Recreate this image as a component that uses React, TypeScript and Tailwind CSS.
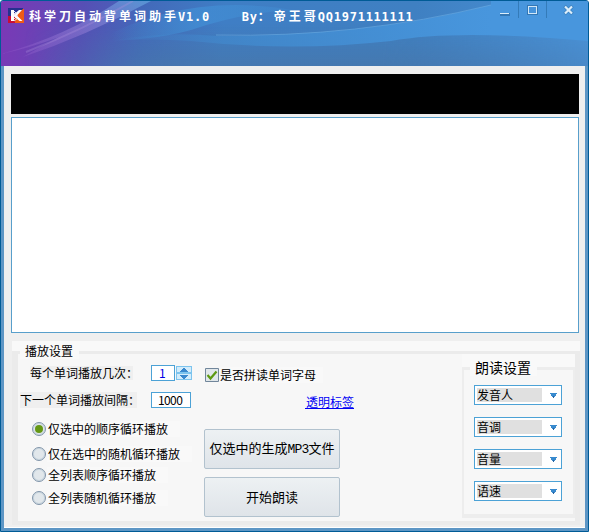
import React from "react";

const mono = "font-['DejaVu_Sans_Mono','Noto_Sans_CJK_SC',monospace]";
const digits = "font-['Noto_Sans_CJK_SC',sans-serif]";

function SpinArrow({ up = false }: { up?: boolean }) {
  return (
    <div className="flex h-[7px] w-4 items-center justify-center border border-[#7cc4ee] bg-[#d3ecfb]">
      <svg width="8" height="4" viewBox="0 0 8 4" shapeRendering="crispEdges">
        <path d={up ? "M3 0h2v1h1v1h1v1h1v1H0V3h1V2h1V1h1z" : "M0 0h8v1H7v1H6v1H5v1H3V3H2V2H1V1H0z"} fill="#3888ce" />
      </svg>
    </div>
  );
}

function Radio({ label, checked = false, className }: { label: string; checked?: boolean; className: string }) {
  return (
    <div className={`ml-[14px] flex h-4 shrink-0 items-center ${className}`}>
      <div className="flex size-[14px] shrink-0 items-center justify-center rounded-full border border-[#8195aa] bg-[#e1e7eb] shadow-[inset_0_0_0_1px_#c9d6df]">
        {checked && <div className="size-2 rounded-full bg-[#659815]" />}
      </div>
      <span className="ml-px h-4 bg-[#f9f9f9] pr-3 pl-px leading-4">{label}</span>
    </div>
  );
}

function Select({ label }: { label: string }) {
  return (
    <div className="flex h-5 w-[88px] items-center justify-between border border-[#4ca2d6] bg-white pr-1 pl-[2px]">
      <span className="h-[14px] w-[65px] bg-[#e0e0e0] leading-[14px]">{label}</span>
      <svg width="7" height="5" viewBox="0 0 7 5" className="mt-px" shapeRendering="crispEdges">
        <path d="M0 0h7v1H6v2H5v1H4v1H3V4H2V3H1V1H0z" fill="#388ace" />
        <path d="M3 3h1v2H3z" fill="#2b64a0" />
      </svg>
    </div>
  );
}

function HeaderArt() {
  return (
    <svg className="absolute inset-0" width="587" height="65" viewBox="0 0 587 65">
      <defs>
        <linearGradient id="base" gradientUnits="userSpaceOnUse" x1="0" y1="0" x2="587" y2="60">
          <stop offset="0" stopColor="#7b38b6" />
          <stop offset=".06" stopColor="#6d41b6" />
          <stop offset=".14" stopColor="#564fb5" />
          <stop offset=".24" stopColor="#4369ba" />
          <stop offset=".38" stopColor="#3f7ec5" />
          <stop offset=".7" stopColor="#3f80c2" />
          <stop offset="1" stopColor="#4a93d8" />
        </linearGradient>
        <linearGradient id="shade" x1="0" y1="0" x2="0" y2="1">
          <stop offset=".35" stopColor="#4776a8" stopOpacity="0" />
          <stop offset="1" stopColor="#4776aa" stopOpacity=".75" />
        </linearGradient>
        <linearGradient id="shadeX" x1="0" y1="0" x2="1" y2="0">
          <stop offset=".04" stopColor="#fff" stopOpacity="0" />
          <stop offset=".28" stopColor="#fff" />
          <stop offset=".65" stopColor="#fff" />
          <stop offset="1" stopColor="#fff" stopOpacity=".45" />
        </linearGradient>
        <mask id="fade">
          <path fill="url(#shadeX)" d="M0 0h587v65H0z" />
        </mask>
        <linearGradient id="ray" x1="0" y1="1" x2="1" y2="0">
          <stop offset="0" stopColor="#b174dd" stopOpacity=".15" />
          <stop offset=".5" stopColor="#a78be0" stopOpacity=".4" />
          <stop offset="1" stopColor="#65b0e4" stopOpacity=".6" />
        </linearGradient>
        <linearGradient id="swell" gradientUnits="userSpaceOnUse" x1="110" y1="0" x2="300" y2="0">
          <stop offset="0" stopColor="#4290d6" stopOpacity="0" />
          <stop offset=".45" stopColor="#4290d6" stopOpacity=".7" />
          <stop offset="1" stopColor="#4290d6" stopOpacity=".3" />
        </linearGradient>
        <linearGradient id="arc" gradientUnits="userSpaceOnUse" x1="110" y1="0" x2="490" y2="0">
          <stop offset="0" stopColor="#4290d6" stopOpacity="0" />
          <stop offset=".4" stopColor="#4290d6" stopOpacity=".6" />
          <stop offset="1" stopColor="#4896dd" />
        </linearGradient>
      </defs>
      <path fill="url(#base)" d="M0 0h587v65H0z" />
      <path fill="url(#shade)" mask="url(#fade)" d="M0 0h587v65H0z" />
      <path fill="url(#swell)" d="M95 40Q160 4 235 4Q275 5 290 9Q240 12 190 29Q150 40 95 40z" />
      <path fill="url(#arc)" d="M110 40Q160 30 215 35Q370 35 490 4V0H587V40Q455 28 390 40Q290 51 190 40Q150 37 110 40z" />
      <path fill="none" stroke="#73b4e7" strokeOpacity=".5" d="M215 34Q355 37 490 4" />
      <path fill="url(#ray)" d="M0 53Q65 35 118 0h32Q85 35 22 56Q70 28 105 14Q60 40 0 53z" />
      <path fill="none" stroke="#b192df" strokeOpacity=".3" strokeWidth="2" d="M25 51Q82 29 132 0" />
    </svg>
  );
}

export default function App() {
  return (
    <div className="h-[532px] w-[589px] bg-white font-['Noto_Sans_CJK_SC',sans-serif] text-xs text-black">
      <div className="flex h-[532px] w-[589px] flex-col overflow-hidden rounded-t-[3px] border border-[#005b96] bg-[#5d96c5]">
        <header className="relative flex h-[65px] shrink-0 items-start justify-between overflow-hidden">
          <HeaderArt />
          <div className="relative flex items-start pt-[7px] pl-[7px] font-bold text-white">
            <svg width="16" height="16" viewBox="0 0 16 16">
              <path fill="#25318f" d="M0 0h15v8H0z" />
              <path fill="#c80d35" d="M0 8h8v7H0z" />
              <path fill="#ef5b16" d="M15 1h1v14H7V8z" />
              <path fill="#fff" d="M3 2h3v11H3zM11 2h3L9 7.500 14.500 13h-3L6 8.500v-2z" />
              <path fill="none" stroke="#eef2ff" strokeWidth=".9" d="M6 3l3 3M6 5l3 3M6 11l3-3M6 13l4-3M5 8h5" />
            </svg>
            <div className={`mt-px ml-[5px] flex h-4 text-xs leading-[17px] whitespace-pre ${mono}`}>
              <span className="tracking-[3px]">科学刀自动背单词助手</span>
              <span className="-ml-px tracking-[0.75px]">V1.0    By</span>
              <span className="w-[16px]">：</span>
              <span className="tracking-[3px]">帝王哥</span>
              <span className="-ml-px tracking-[0.75px]">QQ1971111111</span>
            </div>
          </div>
          <svg className="relative" width="97" height="18" viewBox="0 0 97 18" shapeRendering="crispEdges">
            <path d="M27.500 0v17M55.500 0v17" stroke="#347bb9" />
            <path d="M9 12h10v3H9z" fill="#3377b4" />
            <path d="M9 12h9v1H9z" fill="#dceefb" />
            <path d="M36 4h11v10H36z" fill="#3377b4" />
            <path d="M37.500 5.500h8v7h-8z" fill="#4794db" stroke="#d3e8f8" />
            <g shapeRendering="auto" fill="none">
              <path d="M73.500 5l8 8M81.500 5l-8 8" stroke="#3a80bf" strokeWidth="3.600" />
              <path d="M74 5.500l7 7M81 5.500l-7 7" stroke="#dceefa" strokeWidth="2.200" />
            </g>
          </svg>
        </header>

        <main className="ml-[3px] flex h-[462px] w-[581px] shrink-0 flex-col border-b border-white bg-[#efefef]">
          <div className="mt-2 ml-[7px] h-10 w-[568px] shrink-0 bg-black" />
          <div className="mt-[3px] ml-[7px] h-[216px] w-[568px] shrink-0 border border-[#589fcb] bg-white" />

          <section className="mt-2 ml-2 flex h-[184px] w-[568px] shrink-0 flex-col bg-[#ebebeb]">
            <div className="flex h-[10px] shrink-0 bg-[#f9f9f9] pl-2">
              <h2 className="z-10 mt-[2px] h-4 w-[59px] shrink-0 bg-[#f9f9f9] pl-[5px] leading-[16px]">播放设置</h2>
            </div>
            <div className="mt-[3px] ml-[6px] flex h-[167px] w-[557px] shrink-0 bg-[#f7f7f7]">
              <div className="flex w-[186px] shrink-0 flex-col">
                <div className="mt-[11px] flex h-4 shrink-0 items-center">
                  <span className="ml-[12px] h-[14px] w-[103px] bg-[#efefef] leading-[13px] whitespace-nowrap">每个单词播放几次：</span>
                  <span className={`ml-[18px] flex h-4 w-6 items-center border border-[#4ca2d6] bg-white pl-[7px] text-[#0000e5] ${digits}`}>1</span>
                  <span className="ml-px flex flex-col"><SpinArrow up /><SpinArrow /></span>
                </div>
                <div className="mt-[11px] flex h-4 shrink-0 items-center">
                  <span className="ml-[2px] h-4 w-[117px] bg-[#efefef] leading-4 whitespace-nowrap">下一个单词播放间隔：</span>
                  <span className={`ml-[14px] flex h-4 w-10 items-center border border-[#4ca2d6] bg-white pl-[6px] tracking-[-0.6px] ${digits}`}>1000</span>
                </div>
                <Radio className="mt-[13px]" label="仅选中的顺序循环播放" checked />
                <Radio className="mt-[9px]" label="仅在选中的随机循环播放" />
                <Radio className="mt-[5px]" label="全列表顺序循环播放" />
                <Radio className="mt-[7px]" label="全列表随机循环播放" />
              </div>

              <div className="flex w-[258px] shrink-0 flex-col">
                <div className="mt-[13px] ml-px flex h-4 items-center">
                  <svg width="14" height="14" viewBox="0 0 14 14">
                    <path d="M.5.5h13v13H.5z" fill="#e1e7ea" stroke="#71869b" />
                    <path d="M2.500 7l3 3.500 6-7" fill="none" stroke="#5d9912" strokeWidth="2.200" />
                  </svg>
                  <span className="ml-px h-4 bg-[#f9f9f9] pr-[7px] leading-4">是否拼读单词字母</span>
                </div>
                <a className="mt-[11px] ml-[101px] h-[15px] w-[49px] border-b border-[#0000f5] pl-px leading-[15px] text-[#0000f5]">透明标签</a>
                <button className="mt-5 h-10 w-[136px] shrink-0 rounded-[2px] border border-[#b2c2ce] bg-linear-to-b from-[#edf1f3] to-[#dfe4e9] text-[13px] whitespace-nowrap">
                  仅选中的生成<span className="font-['Liberation_Mono',monospace] tracking-[-0.8px]">MP3</span>文件
                </button>
                <button className="mt-2 h-10 w-[136px] shrink-0 rounded-[2px] border border-[#b2c2ce] bg-linear-to-b from-[#edf1f3] to-[#dfe4e9] text-[13px]">开始朗读</button>
              </div>

              <fieldset className="flex h-[164px] w-[113px] flex-col border-b-4 border-[#ededed] bg-[#f9f9f9]">
                <div className="flex h-[16px] shrink-0 items-end justify-between">
                  <span className="h-[3px] w-[8px] bg-[#ededed]" />
                  <h2 className="z-10 h-[17px] w-[67px] translate-y-[6px] bg-[#f9f9f9] pl-[5px] text-sm leading-[17px]">朗读设置</h2>
                  <span className="h-[3px] w-[38px] bg-[#ededed]" />
                </div>
                <div className="flex h-[144px] flex-col gap-3 border-x-2 border-[#ededed] bg-[#f7f7f7] pt-[15px] pl-[10px]">
                  <Select label="发音人" />
                  <Select label="音调" />
                  <Select label="音量" />
                  <Select label="语速" />
                </div>
              </fieldset>
            </div>
          </section>
        </main>
      </div>
    </div>
  );
}
